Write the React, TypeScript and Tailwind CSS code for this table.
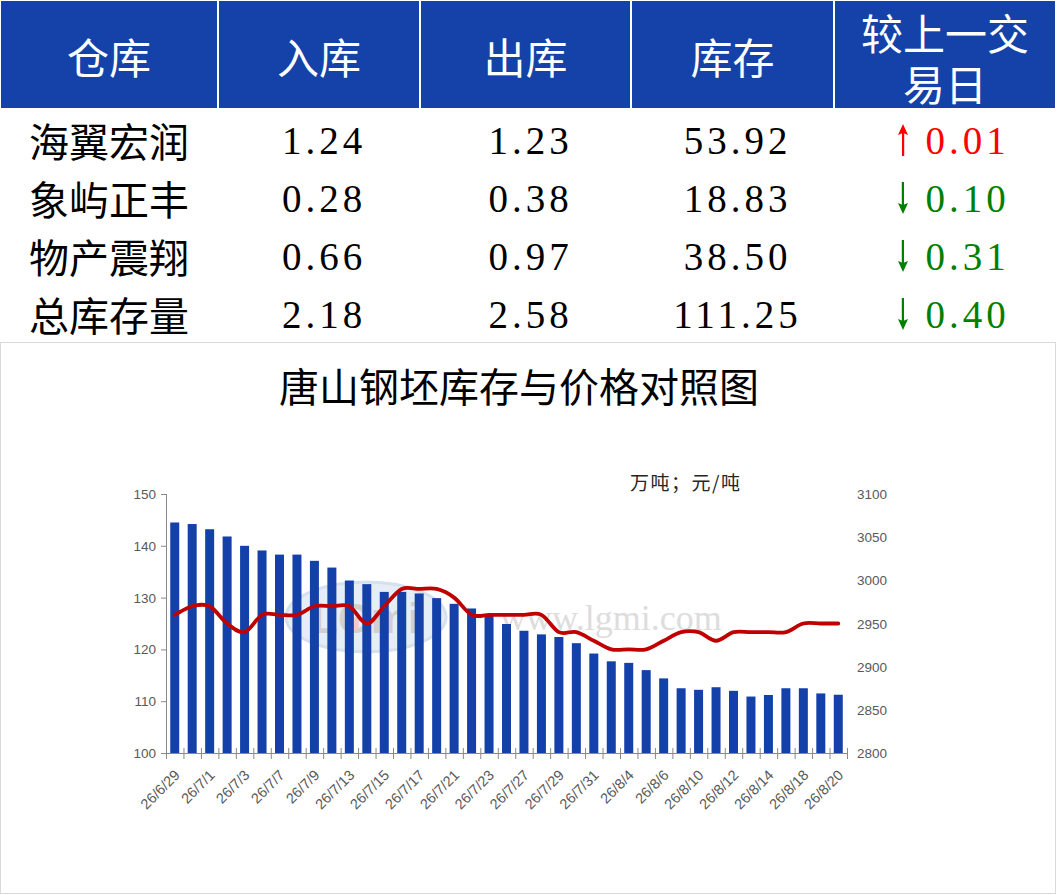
import React from 'react';

const cjk = "font-['Noto_Sans_CJK_SC',sans-serif]";
const num = "font-['Liberation_Serif',serif]";

const headers = ['仓库', '入库', '出库', '库存'];

const rows = [
  { name: '海翼宏润', inQty: '1.24', outQty: '1.23', stock: '53.92', diff: '0.01', up: true },
  { name: '象屿正丰', inQty: '0.28', outQty: '0.38', stock: '18.83', diff: '0.10', up: false },
  { name: '物产震翔', inQty: '0.66', outQty: '0.97', stock: '38.50', diff: '0.31', up: false },
  { name: '总库存量', inQty: '2.18', outQty: '2.58', stock: '111.25', diff: '0.40', up: false },
];

// 库存（万吨）
const stock = [
  144.5, 144.2, 143.2, 141.8, 140.0, 139.1, 138.3, 138.3, 137.1, 135.8, 133.3, 132.6, 131.1,
  131.1, 130.8, 129.9, 128.8, 127.9, 126.6, 124.9, 123.6, 122.9, 122.4, 121.2, 119.2, 117.7,
  117.4, 116.0, 114.4, 112.5, 112.2, 112.7, 112.0, 110.9, 111.2, 112.5, 112.5, 111.5, 111.25,
];

// 价格（元/吨）
const price = [
  2960, 2970, 2970, 2950, 2940, 2960, 2960, 2960, 2970, 2970, 2970, 2950, 2970, 2990, 2990,
  2990, 2980, 2960, 2960, 2960, 2960, 2960, 2940, 2940, 2930, 2920, 2920, 2920, 2930, 2940,
  2940, 2930, 2940, 2940, 2940, 2940, 2950, 2950, 2950,
];

const dates = [
  '26/6/29', '26/7/1', '26/7/3', '26/7/7', '26/7/9', '26/7/13', '26/7/15', '26/7/17',
  '26/7/21', '26/7/23', '26/7/27', '26/7/29', '26/7/31', '26/8/4', '26/8/6', '26/8/10',
  '26/8/12', '26/8/14', '26/8/18', '26/8/20',
];

const X0 = 166;
const X1 = 847;
const Y_TOP = 494;
const Y_BOT = 753;
const step = (X1 - X0) / stock.length;
const cx = (i: number) => X0 + step * (i + 0.5);
const yStock = (v: number) => Y_BOT - ((v - 100) / 50) * (Y_BOT - Y_TOP);
const yPrice = (p: number) => Y_BOT - ((p - 2800) / 300) * (Y_BOT - Y_TOP);

const smoothPath = (pts: [number, number][]) => {
  let d = `M${pts[0][0]},${pts[0][1]}`;
  for (let i = 0; i < pts.length - 1; i++) {
    const p0 = pts[i - 1] || pts[i];
    const p1 = pts[i];
    const p2 = pts[i + 1];
    const p3 = pts[i + 2] || p2;
    const c1x = p1[0] + (p2[0] - p0[0]) / 6;
    const c1y = p1[1] + (p2[1] - p0[1]) / 6;
    const c2x = p2[0] - (p3[0] - p1[0]) / 6;
    const c2y = p2[1] - (p3[1] - p1[1]) / 6;
    d += ` C${c1x},${c1y} ${c2x},${c2y} ${p2[0]},${p2[1]}`;
  }
  return d;
};

const Arrow = ({ up }: { up: boolean }) => (
  <svg width="10" height="32" viewBox="0 0 10 32" className="shrink-0">
    <g transform={up ? undefined : 'rotate(180 5 16)'} fill={up ? '#ff0000' : '#008000'}>
      <rect x="4" y="9" width="2.2" height="23" />
      <polygon points="0,11 5,0 10,11 5,9" />
    </g>
  </svg>
);

const Chart = () => {
  const axis = '#898989';
  const label = '#595959';
  const sans = 'Liberation Sans, Arial, sans-serif';
  const line = smoothPath(price.map((p, i) => [cx(i), yPrice(p)]));

  return (
    <svg width="1054" height="486" viewBox="1 405 1054 486" className="block">
      {/* watermark */}
      <g opacity="0.75">
        <ellipse cx="366" cy="617" rx="80" ry="35" fill="#dde7f3" stroke="#c9d8ea" strokeWidth="3" />
        <text x="366" y="633" textAnchor="middle" fontSize="42" fontWeight="bold" fill="#c4c0bf" fontFamily={sans}>
          LGmi
        </text>
        <circle cx="352" cy="624" r="7" fill="#f2b8b8" />
        <text x="500" y="630" fontSize="36" fill="#d2d2d2" fontFamily="Liberation Serif, serif">
          www.lgmi.com
        </text>
      </g>

      {/* bars */}
      {stock.map((v, i) => (
        <rect key={i} x={cx(i) - 4.5} y={yStock(v)} width="9" height={Y_BOT - yStock(v)} fill="#1441a9" />
      ))}

      {/* left axis */}
      <line x1={X0 + 0.5} y1={Y_TOP} x2={X0 + 0.5} y2={Y_BOT} stroke={axis} />
      {[100, 110, 120, 130, 140, 150].map((v) => (
        <g key={v}>
          <line x1={X0 - 5} y1={yStock(v) + 0.5} x2={X0} y2={yStock(v) + 0.5} stroke={axis} />
          <text x={X0 - 10} y={yStock(v) + 5} textAnchor="end" fontSize="13.5" fill={label} fontFamily={sans}>
            {v}
          </text>
        </g>
      ))}

      {/* right axis labels */}
      {[2800, 2850, 2900, 2950, 3000, 3050, 3100].map((p) => (
        <text key={p} x="857" y={yPrice(p) + 5} fontSize="13.5" fill={label} fontFamily={sans}>
          {p}
        </text>
      ))}

      {/* bottom axis */}
      <line x1={X0} y1={Y_BOT + 0.5} x2={X1} y2={Y_BOT + 0.5} stroke={axis} />
      {Array.from({ length: stock.length + 1 }).map((_, k) => (
        <line
          key={k}
          x1={X0 + step * k + 0.5}
          y1={Y_BOT - 5}
          x2={X0 + step * k + 0.5}
          y2={Y_BOT + 6}
          stroke={axis}
        />
      ))}
      {dates.map((d, j) => {
        const x = cx(j * 2) + 6;
        const y = 776;
        return (
          <text
            key={d}
            x={x}
            y={y}
            textAnchor="end"
            fontSize="14.5"
            fill={label}
            fontFamily={sans}
            transform={`rotate(-45 ${x} ${y})`}
          >
            {d}
          </text>
        );
      })}

      {/* price line */}
      <path d={line} fill="none" stroke="#c00000" strokeWidth="3.8" strokeLinejoin="round" strokeLinecap="round" />

      {/* unit */}
      <text x="630" y="490" fontSize="19" letterSpacing="1.5" fill="#262626" fontFamily="Noto Sans CJK SC, sans-serif">
        万吨；元/吨
      </text>
    </svg>
  );
};

const App = () => {
  return (
    <div className="w-[1057px] h-[895px] bg-white overflow-hidden">
      <div className="pl-[1px] pt-[1px]">
        {/* Header */}
        <div className="grid grid-cols-[216px_200px_209px_201px_220px] gap-x-[2px] h-[107px]">
          {headers.map((h) => (
            <div
              key={h}
              className={`bg-[#1442a8] text-white flex items-center justify-center text-[42px] leading-none pt-[2px] ${cjk}`}
            >
              {h}
            </div>
          ))}
          <div
            className={`bg-[#1442a8] text-white flex flex-col items-center justify-center gap-[9px] text-[42px] leading-none pt-[5px] ${cjk}`}
          >
            <div>较上一交</div>
            <div>易日</div>
          </div>
        </div>

        {/* Rows */}
        <div className="h-[234px] pt-[3px]">
          {rows.map((r) => (
            <div key={r.name} className="grid grid-cols-[216px_200px_209px_201px_220px] gap-x-[2px] h-[58px]">
              <div className={`flex items-center justify-center text-[40px] leading-none text-black ${cjk}`}>{r.name}</div>
              {[r.inQty, r.outQty, r.stock].map((v, i) => (
                <div
                  key={i}
                  className={`flex items-center justify-center pl-[10px] text-[39px] leading-none tracking-[4px] text-black ${num}`}
                >
                  {v}
                </div>
              ))}
              <div className="flex items-center justify-center gap-[17px] pl-[18px]">
                <Arrow up={r.up} />
                <span
                  className={`text-[39px] leading-none tracking-[4px] ${num} ${r.up ? 'text-[#ff0000]' : 'text-[#008000]'}`}
                >
                  {r.diff}
                </span>
              </div>
            </div>
          ))}
        </div>
      </div>

      {/* Chart */}
      <div className="w-[1056px] h-[552px] border border-[#d9d9d9] flex flex-col">
        <div className={`pt-[22px] pr-[18px] text-center text-[40px] leading-[40px] text-black ${cjk}`}>
          唐山钢坯库存与价格对照图
        </div>
        <Chart />
      </div>
    </div>
  );
};

export default App;
